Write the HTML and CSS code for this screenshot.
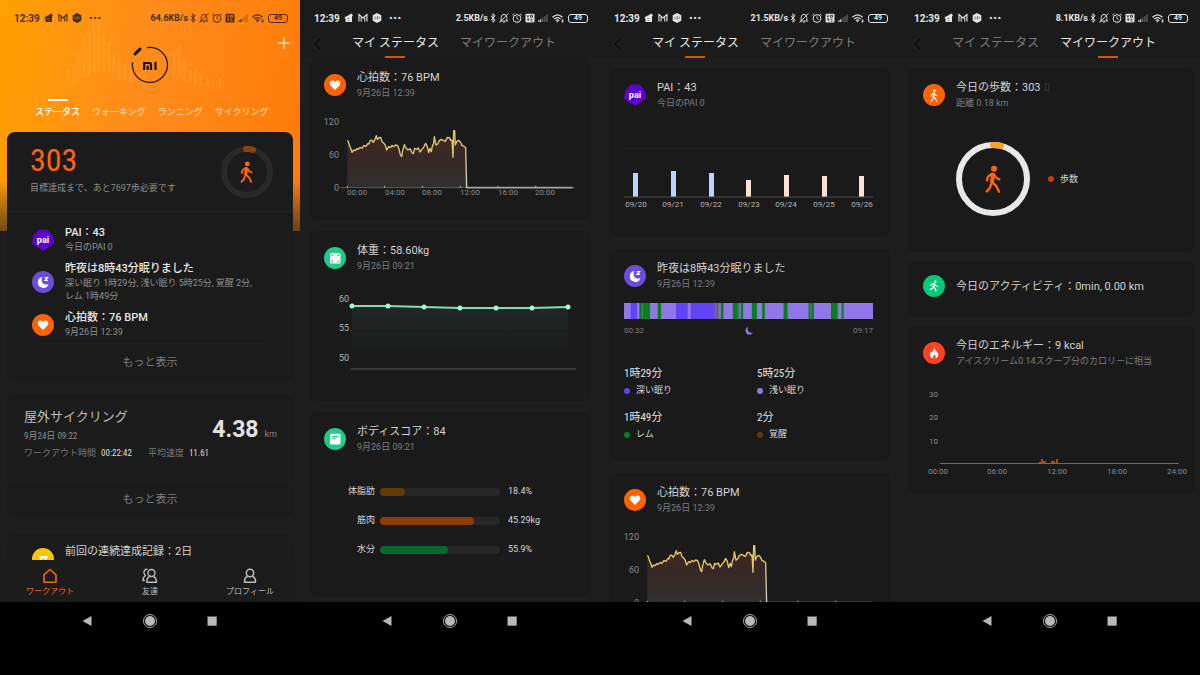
FILE: index.html
```html
<!DOCTYPE html>
<html lang="ja">
<head>
<meta charset="utf-8">
<meta name="viewport" content="width=device-width, initial-scale=1">
<title>マイ ステータス</title>
<link rel="stylesheet" href="styles.css">
</head>
<body>
<svg class="sprite" aria-hidden="true">
  <defs>
    <linearGradient id="hr-fill" x1="0" y1="0" x2="0" y2="1">
      <stop offset="0" stop-color="#432724"/><stop offset=".5" stop-color="#362827"/><stop offset="1" stop-color="#303030"/>
    </linearGradient>
    <linearGradient id="wt-fill" x1="0" y1="0" x2="0" y2="1">
      <stop offset="0" stop-color="#212827"/><stop offset="1" stop-color="#1b1b1b"/>
    </linearGradient>
    <linearGradient id="hr-line" gradientUnits="userSpaceOnUse" x1="0" y1="390" x2="0" y2="563">
      <stop offset=".3" stop-color="#e3c965"/><stop offset="1" stop-color="#c9ccd0"/>
    </linearGradient>
  </defs>
  <symbol id="i-app" viewBox="0 0 10 10"><path fill="currentColor" d="M1 4 5 2l2-1.500 2 1.500-1 1.500V9H1.500V6L.5 5z"/><path d="M3 5.500h3M3.500 7.500h2" stroke="#777" stroke-width=".7"/></symbol>
  <symbol id="i-mail" viewBox=".5 0 9.500 10"><path d="M1.200 8.500v-7l4 3.500 4-3.500v7M3.400 8.500V4.500M7 8.500V4.500" fill="none" stroke="currentColor" stroke-width="1.100"/></symbol>
  <symbol id="i-hex" viewBox="0 0 10 10"><path fill="currentColor" d="M5 0 9.300 2.300v5.400L5 10 .7 7.700V2.300z"/><path d="M3 3.500v3M3 5h2M5.500 3v3.500M7.200 3.500v2.500" stroke="#777" stroke-width=".8"/></symbol>
  <symbol id="i-bt" viewBox="0 0 6 10"><path d="M1 2.800 5 7.200 3 9.300V.7l2 2.100L1 7.200" fill="none" stroke="currentColor" stroke-width="1"/></symbol>
  <symbol id="i-bell" viewBox="0 0 10 10"><path d="M.8 8h8.400M2.200 7.800V4.300Q2.400 1.300 5 1.300t2.800 3v3.500M4.200 9.400h1.600M9.300.4.600 9.700" fill="none" stroke="currentColor" stroke-width=".9"/></symbol>
  <symbol id="i-alarm" viewBox="0 0 10 10"><circle cx="5" cy="5.500" r="3.900" fill="none" stroke="currentColor"/><path d="M5 3.300v2.200l1.500 1M.4 2.300 2.200.6M9.600 2.300 7.800.6" fill="none" stroke="currentColor" stroke-width=".9"/></symbol>
  <symbol id="i-volte" viewBox="0 0 10 10"><rect x=".5" y=".7" width="9" height="8.800" rx="1" fill="currentColor"/><path class="knock" d="m2 2.200.9 2 .9-2M5.500 2.200h2v2h-2zM2 6h2.500M3.200 6v2.200M5.500 6.200h2M5.500 8h2" fill="none" stroke-width=".8"/></symbol>
  <symbol id="i-signal" viewBox="0 0 11 10"><path d="M1 9.300V7.600M3 9.300V6.300" stroke="currentColor" stroke-width="1.300"/><path d="M5.300 9.300V4.500M7.600 9.300V3M9.900 9.300V1.200" stroke="currentColor" stroke-width="1.200" opacity=".4"/></symbol>
  <symbol id="i-wifi" viewBox="0 0 13 10"><path d="M1 4.200Q6 -.5 11 4.200M2.800 6Q6 3.200 9.200 6M4.400 7.600Q6 6.300 7.600 7.600" fill="none" stroke="currentColor" stroke-width="1.200"/><path d="M6 9.500 4.800 8h2.400zM10.300 6.500h1.500v3h-1.500z" fill="currentColor"/></symbol>
  <symbol id="i-walk" viewBox="256 495 48 84"><circle cx="283" cy="506" r="9" fill="currentColor"/><g fill="none" stroke="currentColor" stroke-width="7" stroke-linecap="round" stroke-linejoin="round"><path d="m280 524-3 22" stroke-width="12"/><path d="m277 521-12 9-3 11M284 524l6 10 9 4M276 546l14 12 8 17M274 553l-4 12-9 9"/></g></symbol>
  <symbol id="i-run" viewBox="0 0 24 24"><circle cx="14.500" cy="3.500" r="2.500" fill="currentColor"/><g fill="none" stroke="currentColor" stroke-width="2.500" stroke-linecap="round" stroke-linejoin="round"><path d="M12.500 8.500 10.500 14" stroke-width="4"/><path d="M12 7.500H8L5.500 11M14 9l2 3 3 .5M10.500 14l4 3 1.500 5M10 15l-2 3H4"/></g></symbol>
  <symbol id="b-heart" viewBox="0 0 22 22"><circle cx="11" cy="11" r="11" fill="#ff6203"/><path fill="#fff" d="M11 16 6.300 11.200Q5 9.300 6.200 7.700q2.200-2.400 4.800.2 2.600-2.600 4.800-.2 1.200 1.600-.1 3.500z"/></symbol>
  <symbol id="b-sleep" viewBox="0 0 22 22"><circle cx="11" cy="11" r="11" fill="#6b4ddb"/><path fill="#fff" d="M10.500 5.900a5.500 5.500 0 1 0 6 7.100q-5 1.700-6.700-2.300-1-2.800.7-4.800z"/><path d="M12.800 6.600h2.700l-2.500 2.700h3" fill="none" stroke="#fff" stroke-width="1.200"/></symbol>
  <symbol id="b-weight" viewBox="0 0 22 22"><circle cx="11" cy="11" r="11" fill="#1fcb86"/><rect x="6" y="6" width="10.500" height="10.500" rx="1.500" fill="#fff"/><g fill="#1fcb86"><circle cx="8.200" cy="8.200" r=".9"/><circle cx="14.300" cy="8.200" r=".9"/><circle cx="8.200" cy="14.300" r=".9"/><circle cx="14.300" cy="14.300" r=".9"/></g></symbol>
  <symbol id="b-body" viewBox="0 0 22 22"><circle cx="11" cy="11" r="11" fill="#1fcb86"/><rect x="6" y="5.800" width="10.500" height="10.700" rx="1.500" fill="#fff"/><path d="M8 8.500h6.500M8 10.700h4" stroke="#1fcb86" stroke-width="1.100"/></symbol>
  <symbol id="b-fire" viewBox="0 0 22 22"><circle cx="11" cy="11" r="11" fill="#fd4323"/><path fill="#fff" d="M11 5q.4 2.400 2.700 4.400 3 3.600.3 6.200-1 .9-1.600.9 1-2.500-1-4-2 1.600-1.200 4Q6.500 15.300 7 12q.4-1.800 1.400-2.600l.6 1.200Q11.300 8 11 5z"/></symbol>
  <symbol id="b-streak" viewBox="0 0 22 22"><circle cx="11" cy="11" r="11" fill="#fcc208"/><path d="M7 8h9v2H7z" fill="#fff"/><path d="M8.500 10h6v6h-6z" fill="#fff"/><path d="M10 10.500h3V13h-3z" fill="#fcc208"/></symbol>
  <symbol id="hr-plot" viewBox="0 0 252 90">
    <g transform="translate(-24 -110) scale(.33333)">
      <path fill="url(#hr-fill)" d="M142 563V421l3 4 3 11 4 9 4 12 5-7 5 2 4-6 5 2 5-6 6 3 6-9 6 3 6-9 3 2 3-10 5-2 5 7 5-9 4-11 3 11 4-4 6-2 4 13 6 5 4 6 4 14 6-10 5 3 5-7 5 4 6-5 6 2 4 10 4 17 4 6 3-18 5-18 5 10 6 6 6-4 6 12 4 3 4-16 6 3 5-4 5 12 6-8 6-8 5-10 5 10 4 18 4-13 4 10 3-17 4-8 2-20 5 25 5-3 5-10 6-4 6 3 6 3 6-12 6 1 5 9 3-2 3 52 2-80h3l2 43 4-10 6-4 5 5 5 10 6 3 5 4 3 121z"/>
      <path d="M120 563h705" stroke="#5c5c5c" stroke-width="3" fill="none"/>
      <path d="M500 563h318" stroke="#a3a3a6" stroke-width="5" fill="none"/>
      <path d="M142 557v7M254 557v7M368 557v7M481 557v7M594 557v7M707 557v7" stroke="#aaa" stroke-width="3"/>
      <path fill="none" stroke="url(#hr-line)" stroke-width="4" stroke-linejoin="round" d="M142 421l3 4 3 11 4 9 4 12 5-7 5 2 4-6 5 2 5-6 6 3 6-9 6 3 6-9 3 2 3-10 5-2 5 7 5-9 4-11 3 11 4-4 6-2 4 13 6 5 4 6 4 14 6-10 5 3 5-7 5 4 6-5 6 2 4 10 4 17 4 6 3-18 5-18 5 10 6 6 6-4 6 12 4 3 4-16 6 3 5-4 5 12 6-8 6-8 5-10 5 10 4 18 4-13 4 10 3-17 4-8 2-20 5 25 5-3 5-10 6-4 6 3 6 3 6-12 6 1 5 9 3-2 3 52 2-80h3l2 43 4-10 6-4 5 5 5 10 6 3 5 4 3 121"/>
    </g>
  </symbol>
</svg>

<main class="phones">
  <section class="phone">
    <div class="screen home">
      <svg class="equalizer" viewBox="0 0 300 130" aria-hidden="true"><path d="M68 82V70M74 86V64M79 80V54M84 78V38M89 76V30M94 72V26M99 72V22M104 70V36M109 72V42M114 74V52M119 78V58M125 80V64M131 82V70M174 76V52M179 76V46M184 80V60M190 82V70M195 84V68M201 86V74M208 86V78M220 88V78" stroke="#ffc050" stroke-width="3" opacity=".2"/></svg>
      <div class="status status-dark">
        <span class="clock">12:39</span>
        <span class="notices"><svg><use href="#i-app"/></svg><svg><use href="#i-mail"/></svg><svg><use href="#i-hex"/></svg><b>···</b></span>
        <span class="rate">64.6KB/s</span>
        <span class="system"><svg class="bt"><use href="#i-bt"/></svg><svg><use href="#i-bell"/></svg><svg><use href="#i-alarm"/></svg><svg><use href="#i-volte"/></svg><svg><use href="#i-signal"/></svg><svg class="wifi"><use href="#i-wifi"/></svg><span class="battery">49</span></span>
      </div>
      <button class="add" aria-label="追加"><svg viewBox="0 0 12 12"><path d="M6 0v12M0 6h12" stroke="currentColor"/></svg></button>
      <svg class="logo" viewBox="0 0 38 38" role="img" aria-label="Mi"><path d="M16 1.700A17.500 17.500 0 1 1 1.700 16" fill="none" stroke="#2a1c08" stroke-width="1.300"/><path d="m4 8 5-5" stroke="#141414" stroke-width="3" stroke-linecap="round"/><path d="M13.200 24v-7h5.300q1.500 0 1.500 1.500V24M16.700 24v-4.500M24.500 15.800V24" fill="none" stroke="#141414" stroke-width="2.200"/></svg>
      <nav class="modes"><a class="on" href="#">ステータス</a><a href="#">ウォーキング</a><a href="#">ランニング</a><a href="#">サイクリング</a></nav>

      <article class="panel">
        <div class="summary">
          <div class="count"><div class="steps">303</div><p class="goal">目標達成まで、あと7697歩必要です</p></div>
          <svg class="goal-ring" viewBox="0 0 52 52"><circle cx="26" cy="26" r="23" fill="none" stroke="#292929" stroke-width="6"/><path d="M25 3q4-.2 7 .8" fill="none" stroke="#8c4112" stroke-width="6" stroke-linecap="round"/><use href="#i-walk" x="19" y="15" width="13" height="22" color="#ff6508"/></svg>
        </div>
        <ul class="feed">
          <li><svg class="badge" viewBox="0 0 22 22"><path d="M6.500.5h9l5.500 6.500 1 7.500L11 22 0 14.500 1.200 7z" fill="#5a03cf"/><text x="11" y="14" class="pai">pai</text></svg><div><h3>PAI：43</h3><p>今日のPAI 0</p></div></li>
          <li><svg class="badge"><use href="#b-sleep"/></svg><div><h3>昨夜は8時43分眠りました</h3><p>深い眠り 1時29分, 浅い眠り 5時25分, 覚醒 2分,<br>レム 1時49分</p></div></li>
          <li><svg class="badge"><use href="#b-heart"/></svg><div><h3>心拍数：76 BPM</h3><p>9月26日 12:39</p></div></li>
        </ul>
        <button class="more inset">もっと表示</button>
      </article>

      <article class="panel ride">
        <div class="ride-body">
          <div>
            <h2>屋外サイクリング</h2>
            <p class="narrow">9月24日 09:22</p>
            <p class="metrics"><span>ワークアウト時間</span><b>00:22:42</b><span class="second">平均速度</span><b>11.61</b></p>
          </div>
          <p class="distance"><strong>4.38</strong><span>km</span></p>
        </div>
        <button class="more">もっと表示</button>
      </article>

      <article class="panel streak"><svg class="badge"><use href="#b-streak"/></svg><h3>前回の連続達成記録：2日</h3></article>

      <nav class="tabbar">
        <a class="on" href="#"><svg viewBox="0 0 16 16"><path d="M2 6.800 8 1.500l6 5.300v7.400H2z" fill="none" stroke="currentColor" stroke-width="1.600" stroke-linejoin="round"/></svg>ワークアウト</a>
        <a href="#"><svg viewBox="0 0 16 16"><g fill="none" stroke="currentColor" stroke-width="1.400" stroke-linejoin="round"><circle cx="9.500" cy="5" r="3.500"/><path d="M7.500 8.500Q4.500 10 4.800 14.300h9.700Q14.800 10 11.500 8.500M5.500 1.200Q1.500 1.200 2 5q.3 1.700 1.500 2.500Q1 9 1 12.500h1.800"/></g></svg>友達</a>
        <a href="#"><svg viewBox="0 0 16 16"><g fill="none" stroke="currentColor" stroke-width="1.500" stroke-linejoin="round"><circle cx="8" cy="5" r="3.700"/><path d="M5.600 8.300Q2.400 9.500 2.500 14.300h11Q13.600 9.500 10.400 8.300"/></g></svg>プロフィール</a>
      </nav>
    </div>
    <div class="sysnav"><button aria-label="戻る"><svg viewBox="0 0 14 14"><path d="M10.500 2v10L1.500 7z"/></svg></button><button aria-label="ホーム"><svg viewBox="0 0 14 14"><circle cx="7" cy="7" r="5"/><circle cx="7" cy="7" r="6.500" fill="none" stroke="#b9b9b9" stroke-width=".9"/></svg></button><button aria-label="履歴"><svg viewBox="0 0 14 14"><path d="M2.500 2.500h9.200v9.200H2.500z"/></svg></button></div>
  </section>

  <section class="phone">
    <div class="screen">
      <header class="top">
        <div class="status">
          <span class="clock">12:39</span>
          <span class="notices"><svg><use href="#i-app"/></svg><svg><use href="#i-mail"/></svg><svg><use href="#i-hex"/></svg><b>···</b></span>
          <span class="rate">2.5KB/s</span>
          <span class="system"><svg class="bt"><use href="#i-bt"/></svg><svg><use href="#i-bell"/></svg><svg><use href="#i-alarm"/></svg><svg><use href="#i-volte"/></svg><svg><use href="#i-signal"/></svg><svg class="wifi"><use href="#i-wifi"/></svg><span class="battery">49</span></span>
        </div>
        <nav class="tabs"><button class="back" aria-label="戻る"><svg viewBox="0 0 7 12"><path d="M6 1 1 6l5 5" fill="none" stroke="currentColor"/></svg></button><a class="on" href="#">マイ ステータス</a><a href="#">マイワークアウト</a></nav>
      </header>
      <div class="cards flush">
        <article class="card">
          <div class="head"><svg class="badge"><use href="#b-heart"/></svg><div><h3>心拍数：76 BPM</h3><p>9月26日 12:39</p></div></div>
          <svg class="chart" viewBox="0 0 252 90">
            <use href="#hr-plot" width="252" height="90"/>
            <g class="axis-y"><text x="15" y="15">120</text><text x="15" y="48">60</text><text x="15" y="81">0</text></g>
            <g class="axis-x"><text x="23" y="85">00:00</text><text x="61" y="85">04:00</text><text x="98" y="85">08:00</text><text x="136" y="85">12:00</text><text x="174" y="85">16:00</text><text x="211" y="85">20:00</text></g>
          </svg>
        </article>
        <article class="card">
          <div class="head"><svg class="badge"><use href="#b-weight"/></svg><div><h3>体重：58.60kg</h3><p>9月26日 09:21</p></div></div>
          <svg class="chart" viewBox="0 0 252 98">
            <path d="M28 23h36l36 1 36 1h72l36-1v46H28z" fill="url(#wt-fill)"/>
            <path d="M28 45h216" stroke="#333" stroke-dasharray="2 2"/>
            <path d="M27 86h225" stroke="#585858"/>
            <path d="M28 23h36l36 1 36 1h72l36-1" fill="none" stroke="#7fdfb0" stroke-width="2"/>
            <g fill="#a6f7cd"><circle cx="28" cy="23" r="2.500"/><circle cx="64" cy="23" r="2.500"/><circle cx="100" cy="24" r="2.500"/><circle cx="136" cy="25" r="2.500"/><circle cx="172" cy="25" r="2.500"/><circle cx="208" cy="25" r="2.500"/><circle cx="244" cy="24" r="2.500"/></g>
            <g class="axis-y light"><text x="25" y="19">60</text><text x="25" y="48">55</text><text x="25" y="78">50</text></g>
          </svg>
        </article>
        <article class="card">
          <div class="head"><svg class="badge"><use href="#b-body"/></svg><div><h3>ボディスコア：84</h3><p>9月26日 09:21</p></div></div>
          <dl class="levels">
            <div><dt>体脂肪</dt><dd class="track"><i class="fat" style="width:21%"></i></dd><dd>18.4%</dd></div>
            <div><dt>筋肉</dt><dd class="track"><i class="muscle" style="width:78%"></i></dd><dd>45.29kg</dd></div>
            <div><dt>水分</dt><dd class="track"><i class="water" style="width:57%"></i></dd><dd>55.9%</dd></div>
          </dl>
        </article>
      </div>
    </div>
    <div class="sysnav"><button aria-label="戻る"><svg viewBox="0 0 14 14"><path d="M10.500 2v10L1.500 7z"/></svg></button><button aria-label="ホーム"><svg viewBox="0 0 14 14"><circle cx="7" cy="7" r="5"/><circle cx="7" cy="7" r="6.500" fill="none" stroke="#b9b9b9" stroke-width=".9"/></svg></button><button aria-label="履歴"><svg viewBox="0 0 14 14"><path d="M2.500 2.500h9.200v9.200H2.500z"/></svg></button></div>
  </section>

  <section class="phone">
    <div class="screen">
      <header class="top">
        <div class="status">
          <span class="clock">12:39</span>
          <span class="notices"><svg><use href="#i-app"/></svg><svg><use href="#i-mail"/></svg><svg><use href="#i-hex"/></svg><b>···</b></span>
          <span class="rate">21.5KB/s</span>
          <span class="system"><svg class="bt"><use href="#i-bt"/></svg><svg><use href="#i-bell"/></svg><svg><use href="#i-alarm"/></svg><svg><use href="#i-volte"/></svg><svg><use href="#i-signal"/></svg><svg class="wifi"><use href="#i-wifi"/></svg><span class="battery">49</span></span>
        </div>
        <nav class="tabs"><button class="back" aria-label="戻る"><svg viewBox="0 0 7 12"><path d="M6 1 1 6l5 5" fill="none" stroke="currentColor"/></svg></button><a class="on" href="#">マイ ステータス</a><a href="#">マイワークアウト</a></nav>
      </header>
      <div class="cards airy">
        <article class="card">
          <div class="head"><svg class="badge" viewBox="0 0 22 22"><path d="M6.500.5h9l5.500 6.500 1 7.500L11 22 0 14.500 1.200 7z" fill="#5a03cf"/><text x="11" y="14" class="pai">pai</text></svg><div><h3>PAI：43</h3><p>今日のPAI 0</p></div></div>
          <svg class="chart" viewBox="0 0 252 97">
            <path d="M0 28.500h249" stroke="#262626" stroke-dasharray="2 2"/>
            <g fill="#bcd3fb"><path d="M9 53h5v24H9zM47 51h5v26h-5zM85 53h5v24h-5z"/></g>
            <g fill="#fbe1d6"><path d="M122 60h5v17h-5zM160 55h5v22h-5zM198 56h5v21h-5zM235 56h5v21h-5z"/></g>
            <path d="M0 77h249" stroke="#4a4a4a"/>
            <g class="axis-x mid light"><text x="12" y="87">09/20</text><text x="49" y="87">09/21</text><text x="87" y="87">09/22</text><text x="125" y="87">09/23</text><text x="162" y="87">09/24</text><text x="200" y="87">09/25</text><text x="238" y="87">09/26</text></g>
          </svg>
        </article>
        <article class="card">
          <div class="head"><svg class="badge"><use href="#b-sleep"/></svg><div><h3>昨夜は8時43分眠りました</h3><p>9月26日 12:39</p></div></div>
          <div class="sleep">
            <svg class="stages" viewBox="73 0 746 10" preserveAspectRatio="none">
              <path fill="#9277e8" d="M73 0h746v10H73z"/>
              <path fill="#6243f5" d="M93 0h19v10H93zM229 0h35v10h-35zM273 0h72v10h-72z"/>
              <path fill="#078018" d="M119 0h9v10h-9zM130 0h21v10h-21zM174 0h10v10h-10zM363 0h8v10h-8zM399 0h15v10h-15zM416 0h3v10h-3zM423 0h7v10h-7zM456 0h15v10h-15zM487 0h8v10h-8zM551 0h12v10h-12zM626 0h6v10h-6zM634 0h8v10h-8zM693 0h20v10h-20zM725 0h6v10h-6z"/>
              <path fill="#4f7a58" d="M128 0h2v10h-2zM345 0h3v10h-3zM356 0h3v10h-3zM713 0h2v10h-2z"/>
              <path fill="#6a4060" d="M350 0h4v10h-4z"/>
            </svg>
            <div class="span"><span>00:32</span><svg viewBox="0 0 8 8"><path d="M3 0a4 4 0 1 0 5 5.500Q4.500 6.500 3.200 4 2.200 2 3 0z" fill="#8e72e6"/></svg><span>09:17</span></div>
            <dl class="phases">
              <div><dd>1時29分</dd><dt><i class="deep"></i>深い眠り</dt></div>
              <div><dd>5時25分</dd><dt><i class="shallow"></i>浅い眠り</dt></div>
              <div><dd>1時49分</dd><dt><i class="rem"></i>レム</dt></div>
              <div><dd>2分</dd><dt><i class="awake"></i>覚醒</dt></div>
            </dl>
          </div>
        </article>
        <article class="card">
          <div class="head"><svg class="badge"><use href="#b-heart"/></svg><div><h3>心拍数：76 BPM</h3><p>9月26日 12:39</p></div></div>
          <svg class="chart" viewBox="0 0 252 90">
            <use href="#hr-plot" width="252" height="90"/>
            <g class="axis-y"><text x="15" y="15">120</text><text x="15" y="48">60</text><text x="15" y="81">0</text></g>
          </svg>
        </article>
      </div>
    </div>
    <div class="sysnav"><button aria-label="戻る"><svg viewBox="0 0 14 14"><path d="M10.500 2v10L1.500 7z"/></svg></button><button aria-label="ホーム"><svg viewBox="0 0 14 14"><circle cx="7" cy="7" r="5"/><circle cx="7" cy="7" r="6.500" fill="none" stroke="#b9b9b9" stroke-width=".9"/></svg></button><button aria-label="履歴"><svg viewBox="0 0 14 14"><path d="M2.500 2.500h9.200v9.200H2.500z"/></svg></button></div>
  </section>

  <section class="phone">
    <div class="screen">
      <header class="top">
        <div class="status">
          <span class="clock">12:39</span>
          <span class="notices"><svg><use href="#i-app"/></svg><svg><use href="#i-mail"/></svg><svg><use href="#i-hex"/></svg><b>···</b></span>
          <span class="rate">8.1KB/s</span>
          <span class="system"><svg class="bt"><use href="#i-bt"/></svg><svg><use href="#i-bell"/></svg><svg><use href="#i-alarm"/></svg><svg><use href="#i-volte"/></svg><svg><use href="#i-signal"/></svg><svg class="wifi"><use href="#i-wifi"/></svg><span class="battery">49</span></span>
        </div>
        <nav class="tabs"><button class="back" aria-label="戻る"><svg viewBox="0 0 7 12"><path d="M6 1 1 6l5 5" fill="none" stroke="currentColor"/></svg></button><a href="#">マイ ステータス</a><a class="on" href="#">マイワークアウト</a></nav>
      </header>
      <div class="cards wide">
        <article class="card">
          <div class="head"><svg class="badge" viewBox="0 0 22 22"><circle cx="11" cy="11" r="11" fill="#ff6203"/><use href="#i-walk" x="7" y="5" width="8" height="13" color="#fff"/></svg><div><h3>今日の歩数：303<i class="chip"></i></h3><p>距離 0.18 km</p></div></div>
          <div class="step-goal">
            <svg viewBox="0 0 74 74"><circle cx="37" cy="37" r="34" fill="none" stroke="#e8e8e8" stroke-width="6"/><path d="M37 3q4-.1 8 .9" fill="none" stroke="#fda128" stroke-width="6" stroke-linecap="round"/><use href="#i-walk" x="29" y="23" width="16" height="28" color="#ff6508"/></svg>
            <span><i class="dot"></i>歩数</span>
          </div>
        </article>
        <article class="card slim">
          <div class="head"><svg class="badge" viewBox="0 0 22 22"><circle cx="11" cy="11" r="11" fill="#05c878"/><use href="#i-run" x="5" y="5" width="12" height="12" color="#fff"/></svg><h3>今日のアクティビティ：0min, 0.00 km</h3></div>
        </article>
        <article class="card">
          <div class="head"><svg class="badge"><use href="#b-fire"/></svg><div><h3>今日のエネルギー：9 kcal</h3><p>アイスクリーム0.14スクープ分のカロリーに相当</p></div></div>
          <svg class="chart" viewBox="0 0 256 100">
            <g class="axis-x end"><text x="15" y="19">30</text><text x="15" y="42">20</text><text x="15" y="66">10</text></g>
            <path fill="#b8430e" d="M116 84h2v1h-2zM118 81h2v4h-2zM120 83h3v2h-3zM128 83h4v2h-4zM133 81h2v4h-2z"/>
            <path d="M17 85.500h239" stroke="#6a6a6a"/>
            <g class="axis-x mid"><text x="15" y="96">00:00</text><text x="74" y="96">06:00</text><text x="134" y="96">12:00</text><text x="194" y="96">18:00</text><text x="254" y="96">24:00</text></g>
          </svg>
        </article>
      </div>
    </div>
    <div class="sysnav"><button aria-label="戻る"><svg viewBox="0 0 14 14"><path d="M10.500 2v10L1.500 7z"/></svg></button><button aria-label="ホーム"><svg viewBox="0 0 14 14"><circle cx="7" cy="7" r="5"/><circle cx="7" cy="7" r="6.500" fill="none" stroke="#b9b9b9" stroke-width=".9"/></svg></button><button aria-label="履歴"><svg viewBox="0 0 14 14"><path d="M2.500 2.500h9.200v9.200H2.500z"/></svg></button></div>
  </section>
</main>
</body>
</html>
```
FILE: styles.css
```css
* { box-sizing: border-box; }
body, h2, h3, p, ul, dl, dd { margin: 0; padding: 0; }
body {
  background: #000;
  color: #d8d8d8;
  font: 9px/13px Roboto, "Noto Sans CJK JP", sans-serif;
}
ul { list-style: none; }
a { color: inherit; text-decoration: none; }
button { border: 0; padding: 0; background: none; color: inherit; font: inherit; cursor: pointer; }
svg { display: block; flex: none; }
i { font-style: normal; }
.sprite { position: absolute; width: 0; height: 0; }

.phones { display: grid; grid-template-columns: repeat(4, 1fr); }
.phone { display: flex; flex-direction: column; height: 100vh; min-width: 0; }
.screen { position: relative; flex: 1; min-height: 0; overflow: hidden; background: #1e1e1e; }

/* Device status bar */
.status { --bar: #1c1c1c; display: flex; align-items: center; height: 30px; padding: 6px 12px 0 14px; color: #e4e4e4; }
.status svg { width: 10px; height: 10px; }
.status .bt { width: 6px; }
.status .wifi { width: 14px; }
.knock { stroke: var(--bar); }
.clock { font-size: 10px; font-weight: 700; }
.notices { display: flex; align-items: center; gap: 4px; margin-left: 4px; }
.notices b { margin-left: 3px; font-size: 14px; }
.rate { margin-left: auto; font-weight: 700; }
.system { display: flex; align-items: center; gap: 3px; margin-left: 2px; }
.battery {
  width: 20px; height: 9px; border: 1px solid; border-radius: 3px;
  font-size: 7px; line-height: 7px; font-weight: 700; text-align: center;
}
.status-dark { --bar: #ff8c14; color: #4d2c08; }

/* Device navigation */
.sysnav { display: flex; justify-content: center; align-items: flex-start; gap: 38px; height: 73px; padding-top: 7px; background: #000; }
.sysnav button { display: grid; place-items: center; width: 24px; height: 24px; }
.sysnav svg { width: 14px; height: 14px; fill: #b9b9b9; }

/* Home */
.home {
  display: flex; flex-direction: column;
  background:
    linear-gradient(transparent 78%, rgba(30, 30, 30, .3) 88%, rgba(30, 30, 30, .65)) 0 0 / 100% 231px no-repeat,
    linear-gradient(100deg, #ffa000, #ff8c1c 45%, #ff7a08) 0 0 / 100% 231px no-repeat,
    #1e1e1e;
}
.home > * { flex: none; }
.equalizer { position: absolute; top: 0; left: 0; width: 100%; }
.add { position: absolute; top: 37px; right: 10px; color: #fff; }
.add svg { width: 12px; height: 12px; }
.logo { width: 38px; height: 38px; margin: 16px auto 15px; }
.modes { display: flex; gap: 12px; padding-left: 35px; margin-bottom: 13px; color: #ffe0b8; }
.modes a { display: flex; flex-direction: column; align-items: center; white-space: nowrap; }
.modes a::before { content: ""; width: 20px; height: 2px; margin-bottom: 5px; }
.modes .on { color: #fff; font-weight: 500; }
.modes .on::before { background: #fff; }
.panel { position: relative; margin: 0 7px 13px; border-radius: 8px; background: #1b1b1b; }
.summary { display: flex; justify-content: space-between; align-items: center; height: 80px; padding: 0 20px 0 23px; border-bottom: 1px solid #242424; }
.count { padding-bottom: 5px; }
.steps { color: #ff6508; font: 32px/32px "Liberation Sans Narrow", "Roboto Condensed", Roboto, sans-serif; }
.goal { margin-top: 6px; color: #8c8c8c; }
.goal-ring { width: 52px; height: 52px; }
.feed { display: grid; gap: 7px; padding: 13px 0 4px 25px; }
.feed li { display: flex; align-items: center; gap: 11px; white-space: nowrap; }
.badge { width: 22px; height: 22px; overflow: visible; }
.pai { fill: #fff; font: 700 9px Roboto, sans-serif; text-anchor: middle; }
h3 { color: #d2d2d2; font-size: 11px; line-height: 15px; font-weight: 400; white-space: nowrap; }
.feed h3 { color: #e8e8e8; font-weight: 500; }
.feed p { margin-top: 1px; color: #909090; }
.more { display: block; width: 100%; height: 36px; border-top: 1px solid #202020; color: #7c7c7c; font-size: 11px; }
.more.inset { width: auto; min-width: 80%; height: 38px; margin: 0 auto; }
.ride-body { display: flex; justify-content: space-between; padding: 14px 16px 0 17px; height: 87px; white-space: nowrap; }
.ride h2 { font-size: 13px; line-height: 18px; font-weight: 400; color: #bdbdbd; }
.narrow { margin: 4px 0; font-family: "Roboto Condensed", "Liberation Sans Narrow", Roboto, "Noto Sans CJK JP", sans-serif; color: #8c8c8c; }
.metrics { display: flex; color: #777; }
.metrics b { margin-left: 5px; color: #ddd; font-family: "Roboto Condensed", "Liberation Sans Narrow", Roboto, sans-serif; font-weight: 400; }
.metrics .second { margin-left: 16px; }
.distance { display: flex; align-items: baseline; gap: 6px; height: 26px; margin: 9px 0 0 -60px; color: #868686; }
.distance strong { color: #e2e2e2; font-size: 23px; line-height: 26px; }
.streak { display: flex; gap: 11px; margin-top: 4px; padding: 10px 0 40px 25px; }
.streak .badge { margin-top: 4px; }
.tabbar { position: absolute; left: 0; right: 0; bottom: 0; display: grid; grid-template-columns: repeat(3, 1fr); height: 42px; padding-top: 8px; background: #1c1c1c; color: #bcbcbc; font-size: 8px; line-height: 12px; }
.tabbar a { display: flex; flex-direction: column; align-items: center; gap: 2px; }
.tabbar svg { width: 16px; height: 16px; }
.tabbar .on { color: #f76610; }

/* Detail screens */
.top { background: #1b1b1b; }
.tabs { display: flex; gap: 21px; height: 28px; padding-left: 14px; color: #7b7b7b; font-size: 12px; line-height: 27px; white-space: nowrap; }
.tabs a { position: relative; }
.tabs .on { color: #e6e6e6; }
.tabs .on::after { content: ""; position: absolute; bottom: 0; left: 50%; width: 20px; height: 2px; margin-left: -10px; background: #d4530d; }
.back { width: 7px; margin-right: 10px; color: #000; }
.back svg { width: 7px; height: 12px; }
.cards { display: grid; gap: 11px; padding: 10px 9px; }
.cards.flush { padding-top: 0; }
.cards.airy { gap: 12px; }
.cards.wide { gap: 9px; padding: 10px 5px 10px 7px; }
.card { min-width: 0; padding: 12px 15px 20px; border-radius: 8px; background: #1a1a1a; }
.wide .card { padding: 12px 16px 16px; }
.wide .slim { padding: 14px 16px 20px; }
.head { display: flex; align-items: center; gap: 11px; }
.head p { margin-top: 2px; color: #7d7d7d; white-space: nowrap; }
.chart { width: 100%; margin-top: 10px; overflow: visible; }
.axis-y { fill: #8a8a8a; font-size: 9px; text-anchor: end; }
.axis-x { fill: #8a8a8a; font-size: 8px; }
.light { fill: #b4b4b4; }
.mid { text-anchor: middle; }
.end { text-anchor: end; }

.levels { display: grid; gap: 16px; margin: 31px 0 21px; }
.levels div { display: grid; grid-template-columns: 51px 1fr 71px; align-items: center; column-gap: 5px; }
.levels dt { text-align: right; }
.levels dd:last-child { padding-left: 3px; }
.track { height: 8px; border-radius: 4px; background: #272727; }
.track i { display: block; height: 8px; border-radius: 4px; }
.fat { background: #653a08; }
.muscle { background: #8f3d06; }
.water { background: #06682f; }

.sleep { margin: 12px 3px 0 0; }
.stages { width: 100%; height: 16px; }
.span { display: flex; justify-content: space-between; align-items: center; margin-top: 5px; color: #7d7d7d; font-size: 8px; }
.span svg { width: 8px; height: 8px; }
.phases { display: grid; grid-template-columns: 133px 1fr; row-gap: 13px; margin-top: 29px; }
.phases dd { margin-bottom: 2px; font: 11px/16px "Roboto Condensed", "Liberation Sans Narrow", Roboto, "Noto Sans CJK JP", sans-serif; color: #e2e2e2; }
.phases dt, .step-goal span { display: flex; align-items: center; gap: 6px; }
.phases dt i, .dot { width: 6px; height: 6px; border-radius: 50%; }
.deep { background: #6243f5; }
.shallow { background: #9277e8; }
.rem { background: #078018; }
.awake { background: #653a08; }
.dot { background: #d03a0a; }
.chip { display: inline-block; width: 4px; height: 8px; margin-left: 4px; border: 1px solid #303030; }
.step-goal { display: flex; align-items: center; gap: 18px; margin: 32px 0 20px 33px; }
.step-goal svg { width: 74px; height: 74px; }
```
